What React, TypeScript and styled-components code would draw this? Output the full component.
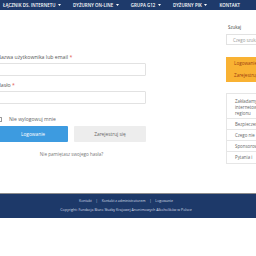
import React from 'react';
import styled, { createGlobalStyle } from 'styled-components';

const GlobalStyle = createGlobalStyle`
  html, body {
    margin: 0;
    padding: 0;
    background: #fff;
  }
  body {
    font-family: "Open Sans", "Liberation Sans", sans-serif;
    overflow: hidden;
  }
  * {
    box-sizing: border-box;
  }
`;

const Page = styled.div`
  width: 256px;
  height: 256px;
  overflow: hidden;
  background: #fff;
  display: flex;
  flex-direction: column;
`;

const NavBar = styled.nav`
  height: 10px;
  flex-shrink: 0;
  background: #1e3a6b;
  display: flex;
  align-items: center;
  padding-left: 3px;
  gap: 12px;
  white-space: nowrap;
`;

const NavItem = styled.a`
  display: flex;
  align-items: center;
  gap: 2.5px;
  color: #fff;
  font-size: 4.4px;
  font-weight: 600;
  letter-spacing: 0.05px;
  text-transform: uppercase;
  text-decoration: none;
`;

const Caret = () => (
  <svg width="3" height="2" viewBox="0 0 6 4">
    <path d="M0 0 L6 0 L3 4 Z" fill="#fff" />
  </svg>
);

const Content = styled.div`
  display: flex;
  align-items: flex-start;
  margin-left: -3px;
  padding-top: 14px;
  height: 183px;
  flex-shrink: 0;
`;

const Main = styled.main`
  width: 149px;
  flex-shrink: 0;
  padding-top: 30px;
`;

const Label = styled.label<{ $gap?: number }>`
  display: block;
  font-size: 5.2px;
  line-height: 6px;
  color: #555;
  margin-top: ${({ $gap }) => $gap ?? 0}px;
`;

const Required = styled.span`
  color: #e2574c;
`;

const TextInput = styled.div<{ $h: number }>`
  margin-top: 3px;
  height: ${({ $h }) => $h}px;
  border: 1px solid #e2e2e2;
  border-radius: 1px;
  background: #fff;
`;

const CheckRow = styled.div`
  margin-top: 12px;
  height: 6px;
  display: flex;
  align-items: center;
  gap: 7px;
  font-size: 5px;
  color: #666;
`;

const CheckBox = styled.span`
  width: 5px;
  height: 5px;
  border: 0.6px solid #999;
  border-radius: 0.5px;
  background: #fff;
`;

const ButtonRow = styled.div`
  margin-top: 4px;
  display: grid;
  grid-template-columns: 70px 72px;
  gap: 6px;
  margin-left: 1px;
`;

const Button = styled.button<{ $primary?: boolean }>`
  height: 16px;
  border: none;
  border-radius: 1px;
  padding: 0;
  font-family: inherit;
  font-size: 4.8px;
  background: ${({ $primary }) => ($primary ? '#3d9be0' : '#ededed')};
  color: ${({ $primary }) => ($primary ? '#fff' : '#666')};
`;

const Forgot = styled.div`
  margin-top: 9px;
  text-align: center;
  font-size: 4.6px;
  line-height: 6px;
  color: #777;
`;

const Sidebar = styled.aside`
  margin-left: 80px;
  width: 70px;
  flex-shrink: 0;
`;

const SideLabel = styled.div`
  padding-left: 2px;
  font-size: 4.4px;
  line-height: 6px;
  color: #444;
`;

const SearchBox = styled.div`
  margin-top: 4px;
  height: 11px;
  border: 1px solid #e2e2e2;
  display: flex;
  align-items: center;
  padding-left: 6px;
  font-size: 4.4px;
  color: #999;
  white-space: nowrap;
`;

const LoginBox = styled.div`
  margin-top: 12px;
  background: #f9b233;
  padding: 1px 8px;
`;

const LoginLink = styled.a`
  display: block;
  line-height: 11.5px;
  font-size: 4.6px;
  color: #9c3d10;
  text-decoration: none;
  white-space: nowrap;
`;

const MenuBox = styled.ul`
  list-style: none;
  margin: 11px 0 0;
  padding: 2px 0 1px;
  border: 1px solid #e6e6e6;
`;

const MenuItem = styled.li`
  padding: 2px 8px;
  font-size: 4.4px;
  line-height: 6px;
  color: #666;
  white-space: nowrap;
  & + & {
    border-top: 1px solid #e6e6e6;
  }
`;

const Footer = styled.footer`
  flex-shrink: 0;
  border-top: 1px solid #8c8c8c;
  background: #1d3969;
  height: 25px;
  display: flex;
  flex-direction: column;
  align-items: center;
  padding-top: 4px;
  gap: 3px;
  margin-left: -4px;
`;

const FooterLinks = styled.div`
  display: flex;
  gap: 4px;
  font-size: 3.5px;
  line-height: 6px;
  color: #d5dbe6;
  white-space: nowrap;
`;

const Copyright = styled.div`
  font-size: 3.6px;
  line-height: 6px;
  color: #d5dbe6;
  white-space: nowrap;
`;

const navItems = [
  { label: 'Łącznik ds. internetu', caret: true },
  { label: 'Dyżurny on-line', caret: true },
  { label: 'Grupa G12', caret: true },
  { label: 'Dyżurny PIK', caret: true },
  { label: 'Kontakt', caret: false },
];

const menuItems = [
  'Zakładamy\ninternetową\nregionu',
  'Bezpieczeństwo',
  'Czego nie',
  'Sponsorowanie',
  'Pytania i',
];

const App: React.FC = () => (
  <>
    <GlobalStyle />
    <Page>
      <NavBar>
        {navItems.map((item) => (
          <NavItem key={item.label}>
            {item.label}
            {item.caret && <Caret />}
          </NavItem>
        ))}
      </NavBar>

      <Content>
        <Main>
          <Label>
            Nazwa użytkownika lub email <Required>*</Required>
          </Label>
          <TextInput $h={13} />
          <Label $gap={6}>
            Hasło <Required>*</Required>
          </Label>
          <TextInput $h={13} />
          <CheckRow>
            <CheckBox />
            Nie wylogowuj mnie
          </CheckRow>
          <ButtonRow>
            <Button $primary>Logowanie</Button>
            <Button>Zarejestruj się</Button>
          </ButtonRow>
          <Forgot>Nie pamiętasz swojego hasła?</Forgot>
        </Main>

        <Sidebar>
          <SideLabel>Szukaj</SideLabel>
          <SearchBox>Czego szukasz...</SearchBox>
          <LoginBox>
            <LoginLink>Logowanie</LoginLink>
            <LoginLink>Zarejestruj się</LoginLink>
          </LoginBox>
          <MenuBox>
            {menuItems.map((text) => (
              <MenuItem key={text}>
                {text.split('\n').map((line) => (
                  <div key={line}>{line}</div>
                ))}
              </MenuItem>
            ))}
          </MenuBox>
        </Sidebar>
      </Content>

      <Footer>
        <FooterLinks>
          <span>Kontakt</span>
          <span>|</span>
          <span>Kontakt z administratorem</span>
          <span>|</span>
          <span>Logowanie</span>
        </FooterLinks>
        <Copyright>
          Copyright: Fundacja Biuro Służby Krajowej Anonimowych Alkoholików w Polsce
        </Copyright>
      </Footer>
    </Page>
  </>
);

export default App;
